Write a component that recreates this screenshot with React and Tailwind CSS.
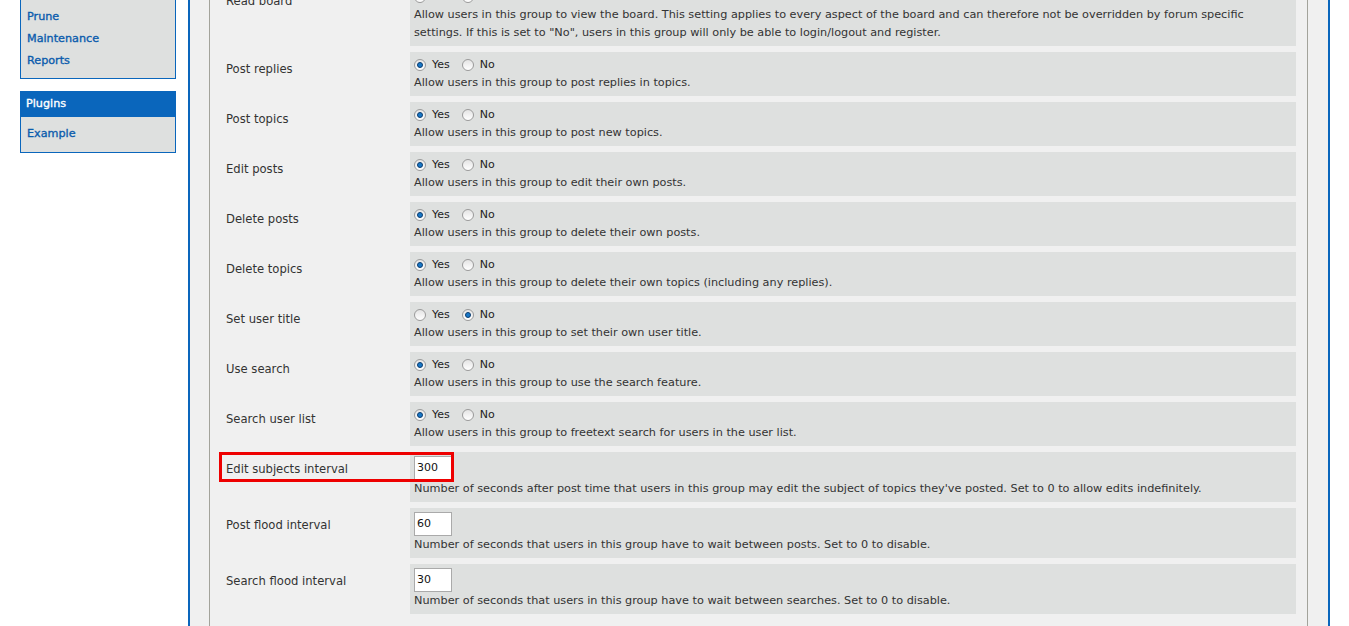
const MENU = ['Prune', 'Maintenance', 'Reports'];

const PERMS = [
  {
    label: 'Read board',
    value: 'yes',
    lines: [
      'Allow users in this group to view the board. This setting applies to every aspect of the board and can therefore not be overridden by forum specific',
      'settings. If this is set to "No", users in this group will only be able to login/logout and register.',
    ],
  },
  { label: 'Post replies', value: 'yes', lines: ['Allow users in this group to post replies in topics.'] },
  { label: 'Post topics', value: 'yes', lines: ['Allow users in this group to post new topics.'] },
  { label: 'Edit posts', value: 'yes', lines: ['Allow users in this group to edit their own posts.'] },
  { label: 'Delete posts', value: 'yes', lines: ['Allow users in this group to delete their own posts.'] },
  { label: 'Delete topics', value: 'yes', lines: ['Allow users in this group to delete their own topics (including any replies).'] },
  { label: 'Set user title', value: 'no', lines: ['Allow users in this group to set their own user title.'] },
  { label: 'Use search', value: 'yes', lines: ['Allow users in this group to use the search feature.'] },
  { label: 'Search user list', value: 'yes', lines: ['Allow users in this group to freetext search for users in the user list.'] },
];

const INTERVALS = [
  {
    label: 'Edit subjects interval',
    value: '300',
    marked: true,
    text: "Number of seconds after post time that users in this group may edit the subject of topics they've posted. Set to 0 to allow edits indefinitely.",
  },
  { label: 'Post flood interval', value: '60', text: 'Number of seconds that users in this group have to wait between posts. Set to 0 to disable.' },
  { label: 'Search flood interval', value: '30', text: 'Number of seconds that users in this group have to wait between searches. Set to 0 to disable.' },
];

function Radio({ checked }) {
  return (
    <span className="w-[12px] h-[12px] rounded-full border border-[#9a9a9a] bg-gradient-to-b from-[#e4e4e4] to-[#ffffff] flex items-center justify-center shrink-0">
      {checked && <span className="w-[6px] h-[6px] rounded-full bg-[#1878c8] border border-[#0d3d6e]" />}
    </span>
  );
}

function YesNo({ value }) {
  return (
    <div className="flex items-center h-[18px] text-[11px] text-[#222]">
      <Radio checked={value === 'yes'} />
      <span className="ml-[6px] mr-[12px]">Yes</span>
      <Radio checked={value === 'no'} />
      <span className="ml-[6px]">No</span>
    </div>
  );
}

export default function App() {
  return (
    <div
      className="w-[1349px] h-[626px] overflow-hidden bg-white flex items-start"
      style={{ fontFamily: '"DejaVu Sans", Verdana, sans-serif' }}
    >
      {/* menu */}
      <div className="ml-[20px] w-[156px] shrink-0">
        <div className="-mt-[10px] bg-[#dee0df] border-[1.5px] border-[#0a66bc] pt-[15px] pb-[6px]">
          {MENU.map((m) => (
            <div key={m} className="h-[22px] flex items-center px-[6px] text-[11.2px] text-[#0b5cad] [-webkit-text-stroke:0.35px]">
              {m}
            </div>
          ))}
        </div>
        <div className="mt-[12px] bg-[#dee0df] border-[1.5px] border-[#0a66bc]">
          <div className="h-[25px] bg-[#0a66bc] flex items-center px-[5px] text-[11.2px] text-white [-webkit-text-stroke:0.35px]">Plugins</div>
          <div className="h-[35px] flex items-center px-[6px] text-[11.2px] text-[#0b5cad] [-webkit-text-stroke:0.35px]">Example</div>
        </div>
      </div>

      {/* main */}
      <div className="ml-[12px] w-[1142px] h-[626px] overflow-hidden shrink-0 border-x-2 border-[#0a66bc] bg-[#f0f0f0] pl-[19px] pr-[20px]">
        <div className="h-[700px] border-x border-[#a3a39b] pl-[10px] pr-[11px]">
          <div className="-mt-[16px] flex flex-col gap-[6px]">
            {PERMS.map((p) => (
              <div key={p.label} className="flex">
                <div className="w-[190px] shrink-0 pl-[6px] pt-[8px] leading-[18px] text-[11.6px] text-[#333]">{p.label}</div>
                <div className="flex-1 bg-[#dee0df] px-[4px] py-[4px]">
                  <YesNo value={p.value} />
                  {p.lines.map((l) => (
                    <div key={l} className="leading-[18px] text-[11.25px] text-[#333] whitespace-nowrap">{l}</div>
                  ))}
                </div>
              </div>
            ))}
            {INTERVALS.map((r) => (
              <div key={r.label} className="flex relative">
                {r.marked && (
                  <div className="absolute left-[-1px] top-0 w-[235px] h-[30px] border-[3px] border-[#ee0000] pointer-events-none" />
                )}
                <div className="w-[190px] shrink-0 pl-[6px] pt-[8px] leading-[18px] text-[11.6px] text-[#333]">{r.label}</div>
                <div className="flex-1 bg-[#dee0df] px-[4px] py-[4px]">
                  <div className="w-[38px] h-[24px] bg-white border border-[#aaa] flex items-center px-[2px] text-[11px] text-[#111]">
                    {r.value}
                  </div>
                  <div className="leading-[18px] text-[11.25px] text-[#333] whitespace-nowrap">{r.text}</div>
                </div>
              </div>
            ))}
          </div>
        </div>
      </div>
    </div>
  );
}
